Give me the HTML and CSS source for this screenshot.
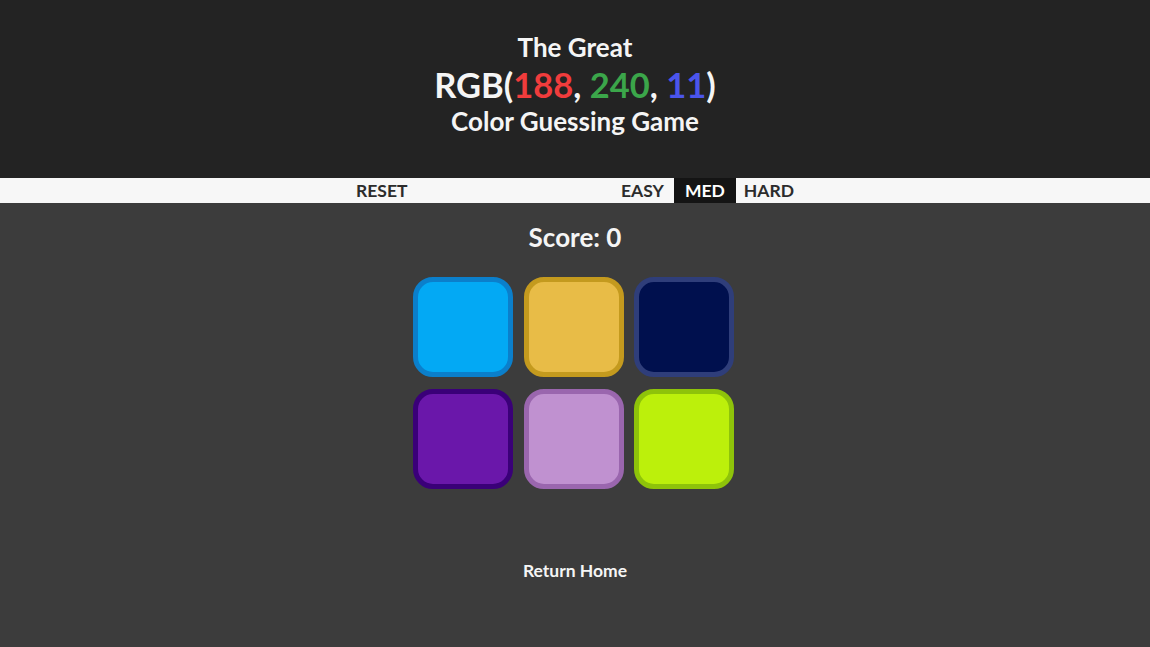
FILE: index.html
```html
<!DOCTYPE html>
<html lang="en">
<head>
<meta charset="utf-8">
<title>The Great RGB Color Guessing Game</title>
<link rel="stylesheet" href="styles.css">
</head>
<body>
<header class="header">
  <h1 class="title">
    <span class="title-small">The Great</span>
    <span class="title-rgb">RGB(<span class="c-red">188</span>, <span class="c-green">240</span>, <span class="c-blue">11</span>)</span>
    <span class="title-small">Color Guessing Game</span>
  </h1>
</header>
<nav class="nav">
  <div class="nav-inner">
    <button class="nav-btn">RESET</button>
    <div class="modes">
      <button class="nav-btn">EASY</button>
      <button class="nav-btn active">MED</button>
      <button class="nav-btn">HARD</button>
    </div>
  </div>
</nav>
<main class="main">
  <div class="score">Score: 0</div>
  <div class="grid">
    <div class="square" style="background:#03a9f4;border-color:#0b7fcb"></div>
    <div class="square" style="background:#e8bc47;border-color:#c49a1e"></div>
    <div class="square" style="background:#00104e;border-color:#2f3e7a"></div>
    <div class="square" style="background:#6a17aa;border-color:#3a0078"></div>
    <div class="square" style="background:#c091d0;border-color:#9a66ae"></div>
    <div class="square" style="background:#bcf00b;border-color:#8ec30a"></div>
  </div>
  <a class="home" href="#">Return Home</a>
</main>
</body>
</html>
```
FILE: styles.css
```css
* { box-sizing: border-box; }
html, body { margin: 0; padding: 0; }
body {
  background: #3c3c3c;
  font-family: Lato, "Liberation Sans", sans-serif;
  color: #f5f5f5;
  min-height: 647px;
}
.header {
  background: #232323;
  height: 178px;
  padding-bottom: 10px;
  display: flex;
  align-items: center;
  justify-content: center;
}
.title {
  margin: 0;
  display: flex;
  flex-direction: column;
  align-items: center;
  font-weight: 700;
  color: #f5f5f5;
}
.title-small {
  font-size: 26px;
  line-height: 37px;
}
.title-rgb {
  font-size: 34.5px;
  line-height: 37px;
}
.c-red { color: #f03c3c; }
.c-green { color: #3ba64a; }
.c-blue { color: #4b55ec; }
.nav {
  background: #f7f7f7;
  height: 25px;
}
.nav-inner {
  width: 458px;
  margin: 0 auto;
  height: 100%;
  display: flex;
  justify-content: space-between;
}
.modes { display: flex; }
.nav-btn {
  border: 0;
  background: transparent;
  font-family: Lato, "Liberation Sans", sans-serif;
  font-weight: 700;
  font-size: 17.5px;
  color: #2c2c2c;
  padding: 0 10px;
  height: 25px;
  line-height: 22px;
  cursor: pointer;
}
.nav-btn.active {
  background: #141414;
  color: #fff;
  padding: 0 11px;
}
.modes .nav-btn:last-child { padding-left: 8px; }
.main {
  display: flex;
  flex-direction: column;
  align-items: center;
}
.score {
  font-size: 26px;
  font-weight: 700;
  margin-top: 19px;
  line-height: 30px;
}
.grid {
  margin-top: 25px;
  margin-right: 3px;
  display: grid;
  grid-template-columns: repeat(3, 100px);
  gap: 12px 10.5px;
}
.square {
  width: 100px;
  height: 100px;
  border: 5px solid;
  border-radius: 20px;
}
.home {
  margin-top: 71px;
  color: #f5f5f5;
  text-decoration: none;
  font-weight: 700;
  font-size: 17.5px;
}
```
